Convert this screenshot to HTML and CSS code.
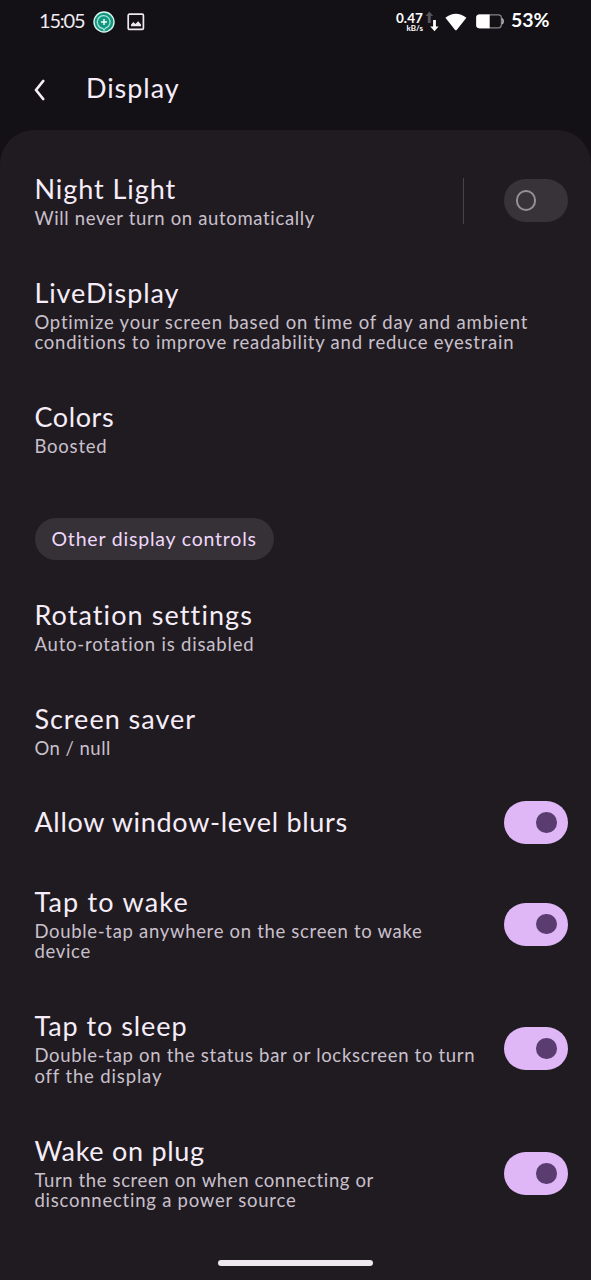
FILE: index.html
```html
<!DOCTYPE html>
<html lang="en">
<head>
<meta charset="utf-8">
<title>Display</title>
<link rel="stylesheet" href="styles.css">
</head>
<body>
<div class="screen">
  <div class="status">
    <span class="clock">15:05</span>
    <svg class="badge" width="22" height="22" viewBox="0 0 22 22" fill="none">
      <circle cx="11" cy="11" r="10" fill="#14957f" stroke="#d5f5ee" stroke-width="1.4"/>
      <path d="M9.800 17.400A6.400 6.400 0 1 1 12.500 17.200L11 19.200 9.800 17.400" stroke="#a5e6d8" stroke-width="1.2"/>
      <path d="M11 8v6M8 11h6" stroke="#f0fffb" stroke-width="1.5"/>
    </svg>
    <svg class="picture" width="18" height="18" viewBox="0 0 18 18" fill="none">
      <rect x="1.2" y="1.2" width="15.2" height="15.2" rx="1.2" stroke="#eee8f0" stroke-width="1.7"/>
      <path d="M4 13.200v-1.800l2.400-2.400 2 2 2.800-2.800 2.800 3.200v1.800z" fill="#eee8f0"/>
    </svg>
    <div class="speed"><span class="rate">0.47</span><span class="unit">kB/s</span></div>
    <svg class="arrows" width="14" height="21" viewBox="0 0 14 21">
      <path d="M4.400 .5 8.200 5H5.800v7H2.800V5H.5z" fill="#57545a"/>
      <path d="M8.100 9h2.800v6.500h2.700L9.500 20.200 5.300 15.500h2.800z" fill="#fff"/>
    </svg>
    <svg class="wifi" width="22" height="18" viewBox="0 0 22 18"><path d="M.4 4.700Q10.800-3.300 21.400 4.700L11.900 16.700Q10.900 17.900 9.900 16.700z" fill="#fff"/></svg>
    <svg class="battery" width="29" height="15" viewBox="0 0 29 15" fill="none">
      <rect x=".8" y=".8" width="24.600" height="13" rx="3" stroke="#858388" stroke-width="1.2"/>
      <path d="M3.200 .4H13.700V14.200H3.200Q.2 14.200 .2 11.200V3.400Q.2 .4 3.200 .4z" fill="#fff"/>
      <path d="M26 4.500Q28.300 7.300 26 10.100" stroke="#b5b3b7" stroke-width="1.600"/>
    </svg>
    <span class="percent">53%</span>
  </div>
  <header class="appbar">
    <svg class="back" width="12" height="22" viewBox="0 0 12 22" fill="none"><path d="M10.200 2 3 11l7.200 9" stroke="#f6edf8" stroke-width="2.700" stroke-linecap="round" stroke-linejoin="round"/></svg>
    <h1 class="title heading">Display</h1>
  </header>
  <main class="panel">
    <section class="row night">
      <div class="text"><h2 class="title">Night Light</h2><p class="desc">Will never turn on automatically</p></div>
      <span class="divider"></span><span class="switch off"><i class="knob"></i></span>
    </section>
    <section class="row live">
      <div class="text"><h2 class="title">LiveDisplay</h2><p class="desc">Optimize your screen based on time of day and ambient<br><span class="second">conditions to improve readability and reduce eyestrain</span></p></div>
    </section>
    <section class="row colors">
      <div class="text"><h2 class="title">Colors</h2><p class="desc">Boosted</p></div>
    </section>
    <div class="chip">Other display controls</div>
    <section class="row rotation">
      <div class="text"><h2 class="title">Rotation settings</h2><p class="desc">Auto-rotation is disabled</p></div>
    </section>
    <section class="row saver">
      <div class="text"><h2 class="title">Screen saver</h2><p class="desc">On / null</p></div>
    </section>
    <section class="row blurs">
      <div class="text"><h2 class="title">Allow window-level blurs</h2></div>
      <span class="switch"><i class="knob"></i></span>
    </section>
    <section class="row wake">
      <div class="text"><h2 class="title">Tap to wake</h2><p class="desc">Double-tap anywhere on the screen to wake<br><span class="second">device</span></p></div>
      <span class="switch"><i class="knob"></i></span>
    </section>
    <section class="row sleep">
      <div class="text"><h2 class="title">Tap to sleep</h2><p class="desc">Double-tap on the status bar or lockscreen to turn<br><span class="second">off the display</span></p></div>
      <span class="switch"><i class="knob"></i></span>
    </section>
    <section class="row plug">
      <div class="text"><h2 class="title">Wake on plug</h2><p class="desc">Turn the screen on when connecting or<br><span class="second">disconnecting a power source</span></p></div>
      <span class="switch"><i class="knob"></i></span>
    </section>
    <div class="homebar"></div>
  </main>
</div>
</body>
</html>
```
FILE: styles.css
```css
* { box-sizing: border-box; }
body { margin: 0; background: #131016; color: #f6edf8; font-family: Lato, sans-serif; font-variant-ligatures: none; }
h1, h2, p { margin: 0; font-weight: 400; }
svg { display: block; flex: none; }
.screen { width: 591px; height: 1280px; display: flex; flex-direction: column; overflow: hidden; }

.status { height: 48px; display: flex; align-items: flex-start; padding: 0 0 0 39px; white-space: nowrap; color: #fff; }
.clock { width: 54px; margin-top: 8px; font-size: 20px; line-height: 24px; letter-spacing: -1.2px; color: #f0eaf2; }
.badge { margin-top: 11px; }
.picture { margin: 13px 0 0 12px; }
.speed { width: 30px; margin: 12px 0 0 248px; display: flex; flex-direction: column; align-items: flex-end; font-weight: 700; }
.rate { font-size: 13.5px; line-height: 13px; letter-spacing: .1px; }
.unit { font-size: 8px; line-height: 7px; }
.arrows { margin: 11px 0 0 2px; }
.wifi { margin: 13px 0 0 6px; }
.battery { margin: 14px 0 0 9px; }
.percent { margin: 8px 0 0 6px; font-size: 19.5px; line-height: 24px; font-weight: 700; }

.appbar { height: 82px; display: flex; align-items: flex-start; padding-left: 33px; }
.back { margin-top: 31px; }
.heading { margin: 24px 0 0 41px; }
.title { font-size: 27px; line-height: 32px; letter-spacing: .94px; white-space: nowrap; }
.desc { margin: 3px 0 1px; font-size: 18.5px; line-height: 20.3px; letter-spacing: .8px; color: #c9c0cc; white-space: nowrap; }

.panel { flex: 1; background: #201b21; border-radius: 34px 34px 0 0; padding-top: 19.5px; display: flex; flex-direction: column; }
.row { display: flex; align-items: center; padding: 23px 23px 25px 34.4px; }
.blurs { padding-top: 21.5px; padding-bottom: 24.5px; }
.text { flex: 1; min-width: 0; }
.divider { width: 1.5px; height: 46px; margin: -12px 40px -12px 0; background: #48434a; }
.switch { width: 64px; height: 43px; flex: none; border-radius: 22px; background: #dfb7f7; display: flex; align-items: center; justify-content: flex-end; padding: 0 11.5px; margin: -6px 0; }
.knob { width: 20.5px; height: 20.5px; border-radius: 50%; background: #5a3c71; }
.off { background: #383339; justify-content: flex-start; }
.off .knob { background: none; border: 2px solid #978f99; }
.chip { align-self: flex-start; margin: 35px 0 16px 34.5px; height: 42.5px; padding: 0 17px; border-radius: 22px; background: #363037; color: #efd9fb; font-size: 19.5px; line-height: 42px; letter-spacing: .8px; white-space: nowrap; }
.homebar { width: 155px; height: 6px; border-radius: 3px; background: #eee7ef; margin: auto auto 14px 218px; }

/* Optical tracking per entry */
.night .desc { letter-spacing: .66px; }
.live .desc { letter-spacing: .82px; }
.live .second { letter-spacing: .77px; }
.colors .title { letter-spacing: .6px; }
.rotation .title { letter-spacing: 1.1px; }
.rotation .desc { letter-spacing: .82px; }
.saver .title { letter-spacing: 1px; }
.saver .desc { letter-spacing: .48px; }
.blurs .title { letter-spacing: .7px; }
.wake .title { letter-spacing: 1.2px; }
.wake .desc, .sleep .desc { letter-spacing: .69px; }
.sleep .second { letter-spacing: .85px; }
.plug .title { letter-spacing: .72px; }
.plug .desc { letter-spacing: .62px; }
.plug .second { letter-spacing: .77px; }
```
